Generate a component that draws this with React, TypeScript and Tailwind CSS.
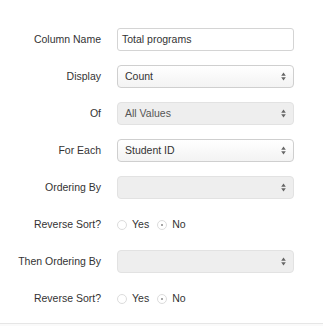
import React from "react";

function Arrows() {
  return (
    <svg width="5" height="9" viewBox="0 0 5 9" className="shrink-0">
      <path d="M2.5 0.5 L4.8 3.8 L0.2 3.8 Z" fill="#666" />
      <path d="M2.5 8.5 L4.8 5.2 L0.2 5.2 Z" fill="#666" />
    </svg>
  );
}

function Select({ value, disabled }: { value?: string; disabled?: boolean }) {
  return (
    <div
      className={
        disabled
          ? "flex h-[23px] w-[177px] items-center justify-between rounded-[4px] border border-[#e2e2e2] bg-[#eeeeee] pl-[7px] pr-[7px] text-[#555]"
          : "flex h-[23px] w-[177px] items-center justify-between rounded-[4px] border border-[#cfcfcf] bg-gradient-to-b from-white to-[#f3f3f3] pl-[7px] pr-[7px] text-[#333]"
      }
    >
      <span>{value}</span>
      <Arrows />
    </div>
  );
}

function Radio({ checked, label }: { checked?: boolean; label: string }) {
  return (
    <label className="flex items-center gap-[5px]">
      <span className="flex h-[10px] w-[10px] items-center justify-center rounded-full border border-[#dcdcdc] bg-white">
        {checked && <span className="h-[2px] w-[2px] rounded-full bg-[#888]" />}
      </span>
      <span>{label}</span>
    </label>
  );
}

function Row({ label, children }: { label: string; children: React.ReactNode }) {
  return (
    <div className="flex h-[23px] items-center gap-[16px]">
      <div className="w-[101px] text-right">{label}</div>
      {children}
    </div>
  );
}

export default function App() {
  return (
    <div
      className="flex h-[326px] w-[323px] flex-col bg-white text-[10.5px] text-[#333]"
      style={{ fontFamily: '"Liberation Sans", Arial, sans-serif' }}
    >
      <div className="flex flex-col gap-[14px] pt-[28px]">
        <Row label="Column Name">
          <div className="flex h-[23px] w-[177px] items-center rounded-[3px] border border-[#d4d4d4] bg-white pl-[4px]">
            Total programs
          </div>
        </Row>
        <Row label="Display">
          <Select value="Count" />
        </Row>
        <Row label="Of">
          <Select value="All Values" disabled />
        </Row>
        <Row label="For Each">
          <Select value="Student ID" />
        </Row>
        <Row label="Ordering By">
          <Select disabled />
        </Row>
        <Row label="Reverse Sort?">
          <div className="flex items-center gap-[8px]">
            <Radio label="Yes" />
            <Radio label="No" checked />
          </div>
        </Row>
        <Row label="Then Ordering By">
          <Select disabled />
        </Row>
        <Row label="Reverse Sort?">
          <div className="flex items-center gap-[8px]">
            <Radio label="Yes" />
            <Radio label="No" checked />
          </div>
        </Row>
      </div>
      <div className="mt-auto h-[3px] border-t border-[#e6e6e6] bg-[#fafafa]" />
    </div>
  );
}
